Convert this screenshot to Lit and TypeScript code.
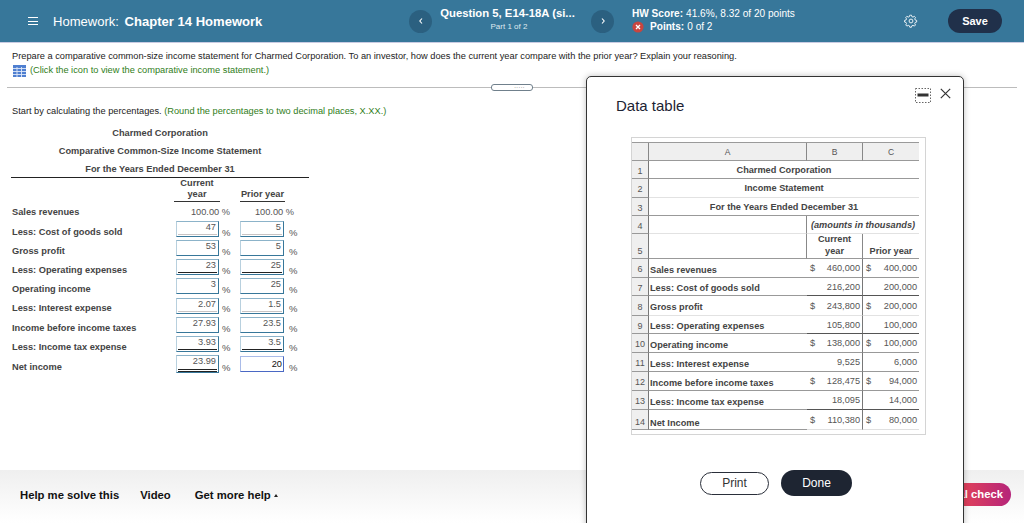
import { LitElement, html, css, svg } from 'lit'
import { customElement } from 'lit/decorators.js'

// rows of the left hand statement: label, current, prior, line under the value
const answers = [
  { label: 'Less: Cost of goods sold', cur: '47', pri: '5', line: 'thin' },
  { label: 'Gross profit', cur: '53', pri: '5', line: '' },
  { label: 'Less: Operating expenses', cur: '23', pri: '25', line: 'dark' },
  { label: 'Operating income', cur: '3', pri: '25', line: '' },
  { label: 'Less: Interest expense', cur: '2.07', pri: '1.5', line: 'thin' },
  { label: 'Income before income taxes', cur: '27.93', pri: '23.5', line: '' },
  { label: 'Less: Income tax expense', cur: '3.93', pri: '3.5', line: 'dark' },
  { label: 'Net income', cur: '23.99', pri: '20', line: 'double' }
]

// rows 6-14 of the popup sheet
const sheet = [
  { n: 6, label: 'Sales revenues', s: true, b: '460,000', c: '400,000', line: 'line' },
  { n: 7, label: 'Less: Cost of goods sold', s: false, b: '216,200', c: '200,000', line: 'dark' },
  { n: 8, label: 'Gross profit', s: true, b: '243,800', c: '200,000', line: 'soft' },
  { n: 9, label: 'Less: Operating expenses', s: false, b: '105,800', c: '100,000', line: 'dark' },
  { n: 10, label: 'Operating income', s: true, b: '138,000', c: '100,000', line: 'line' },
  { n: 11, label: 'Less: Interest expense', s: false, b: '9,525', c: '6,000', line: 'line' },
  { n: 12, label: 'Income before income taxes', s: true, b: '128,475', c: '94,000', line: 'line' },
  { n: 13, label: 'Less: Income tax expense', s: false, b: '18,095', c: '14,000', line: 'dark' },
  { n: 14, label: 'Net Income', s: true, b: '110,380', c: '80,000', line: 'double' }
]

const gear = svg`<path d="M9 1.6l1.1 0 .6 2 1.5.6 1.9-1 1.5 1.5-1 1.9.6 1.5 2 .6 0 2.2-2 .6-.6 1.5 1 1.9-1.5 1.5-1.9-1-1.5.6-.6 2-2.2 0-.6-2-1.5-.6-1.9 1-1.5-1.5 1-1.9-.6-1.5-2-.6 0-2.2 2-.6.6-1.5-1-1.9 1.5-1.5 1.9 1 1.5-.6.6-2z" fill="none" stroke="#fff" stroke-width="1.2" stroke-linejoin="round"/><circle cx="9.5" cy="9.5" r="2.6" fill="none" stroke="#fff" stroke-width="1.2"/>`

@customElement('app-root')
export class AppRoot extends LitElement {
  static styles = css`
    :host {
      display: block;
      position: relative;
      height: 523px;
      overflow: hidden;
      background: #fff;
      font-family: 'Liberation Sans', Arial, sans-serif;
      color: #222;
    }
    .page { display: flex; flex-direction: column; height: 523px; }

    header {
      display: flex;
      align-items: center;
      flex: none;
      height: 43px;
      box-sizing: border-box;
      background: #37779a;
      border-bottom: 1px solid #c9cbe2;
      color: #fff;
    }
    .burger { width: 10px; margin-left: 28px; display: flex; flex-direction: column; gap: 2.5px; }
    .burger i { display: block; height: 1px; background: #fff; }
    .hw { margin-left: 15px; width: 356px; font-size: 13.05px; white-space: nowrap; }
    .hw b { margin-left: 2px; }
    .nav {
      width: 23px; height: 23px; border-radius: 50%;
      background: #2b6080; flex: none;
      display: flex; align-items: center; justify-content: center;
    }
    .question { box-sizing: border-box; width: 159px; padding-right: 5px; text-align: center; flex: none; margin-top: -3px; }
    .question b { display: block; font-size: 11.3px; line-height: 14px; white-space: nowrap; margin-left: -3px; }
    .question span { display: block; font-size: 8px; line-height: 14px; color: #dfe9ef; }
    .score { margin-left: 18px; width: 272px; flex: none; font-size: 10.1px; line-height: 13px; margin-top: -2px; }
    .score div { display: flex; align-items: center; white-space: nowrap; }
    .score svg { margin-right: 6px; }
    .score b { margin-right: 3px; }
    .gear { display: block; flex: none; }
    .save {
      margin-left: 30px; width: 54px; height: 24px; border-radius: 12px;
      background: #20304a; color: #fff; font-size: 11px; font-weight: bold;
      display: flex; align-items: center; justify-content: center;
    }

    main { flex: 1; min-height: 0; font-size: 9.25px; }
    .prompt { padding: 7px 0 0 12px; line-height: 13px; height: 33px; box-sizing: content-box; }
    .green { color: #2f7d20; }
    .hint { display: flex; align-items: center; gap: 4px; margin-top: 1px; margin-left: 1px; }
    .hint svg { display: block; }
    .rule { position: relative; height: 1px; background: #bcbcbc; margin: 4px 7px 0; }
    .grip {
      position: absolute; left: 484px; top: -3px; width: 42px; height: 7px;
      box-sizing: border-box; border: 1px solid #70808c; border-radius: 3px; background: #fff;
      color: #555; font-size: 6px; line-height: 3px; text-align: right; padding-right: 7px; letter-spacing: .5px;
    }
    .start { padding: 17px 0 0 12px; line-height: 12px; }
    .titles { width: 298px; margin: 7px 0 0 11px; text-align: center; font-weight: bold; color: #444; }
    .titles div { height: 18px; line-height: 18px; }
    .statement {
      width: 298px; margin-left: 11px; border-top: 1.5px solid #222;
      display: grid;
      grid-template-columns: 163px 46px 20px 47px 22px;
      grid-template-rows: 24px 20px 19px 19px 19px 19px 20px 19px 19px 21px;
      font-weight: bold; color: #444; margin-top: -1px; box-sizing: border-box;
    }
    .colhead {
      align-self: end; text-align: center; line-height: 11px;
      border-bottom: 1px solid #333; height: 23px; box-sizing: border-box;
      display: flex; flex-direction: column; justify-content: flex-end; padding-bottom: 1px;
    }
    .colhead.pri { margin-right: 2px; }
    .label { padding-left: 1px; align-self: center; white-space: nowrap; }
    .fixed { font-weight: normal; color: #555; text-align: right; align-self: center; grid-column: span 2; white-space: nowrap; }
    .fixed.cur { padding-right: 10px; }
    .fixed.pri { padding-right: 15px; }
    .unit { font-weight: normal; color: #555; align-self: center; padding: 1px 0 0 2px; font-size: 9.5px; }
    .box {
      box-sizing: border-box; width: 43px; height: 16px; align-self: center;
      margin: 0 0 5px 2px;
      border: 1px solid #37779a; border-top-color: #8cb3c9; border-left-color: #b8d0de;
      font-weight: normal; color: #555; text-align: right; line-height: 11px;
      padding: 0 1px 0 1px;
    }
    .box.pri { margin-left: 0; width: 44px; }
    .box span { display: block; height: 12px; padding-right: 1px; }
    .box .thin { border-bottom: 1px solid #c9c4c4; }
    .box .dark { border-bottom: 1px solid #222; }
    .box .double { border-bottom: 3px double #222; height: 13px; }
    .box.tall { height: 18px; }
    .box.active { border-color: #4a68c4; border-top-color: #a9bbe8; border-left-color: #a9bbe8; color: #111; line-height: 15px; }

    footer {
      flex: none; height: 53px; box-sizing: border-box;
      background: linear-gradient(#efefef, #fff);
      display: flex; align-items: center; padding: 0 13px 4px 20px;
      font-size: 11.3px; font-weight: bold; color: #111;
    }
    footer span { white-space: nowrap; }
    .video { margin-left: 21px; }
    .more { margin-left: 24px; }
    .caret { display: inline-block; margin-left: 3px; vertical-align: 2px; border: 2.5px solid transparent; border-top: 0; border-bottom: 3px solid #222; }
    .check {
      margin-left: auto; width: 120px; height: 23px; border-radius: 12px;
      background: linear-gradient(90deg, #e0415a 60%, #b5247a); color: #fff;
      font-size: 11.3px; line-height: 23px; text-align: right; padding-right: 8px; box-sizing: border-box;
    }

    .dialog {
      position: absolute; left: 586px; top: 76px; width: 378px; height: 460px;
      box-sizing: border-box; background: #fff;
      border: 1.5px solid #333; border-radius: 5px;
      box-shadow: 0 0 6px rgba(0, 0, 0, .25);
      padding: 0 0 0 44px;
    }
    .tools { position: absolute; right: 12px; top: 11px; display: flex; align-items: flex-start; gap: 9px; }
    .tools svg { display: block; }
    .dialog h2 { margin: 20px 0 0 -15px; font-size: 15px; font-weight: normal; line-height: 18px; color: #1c2333; }
    .frame {
      box-sizing: border-box; width: 295px; height: 298px;
      margin: 22px 0 0 0; border: 1px solid #d4d4d4; padding: 4px 6px 0 0;
    }
    .sheet {
      display: grid;
      grid-template-columns: 17px 158px 56px 56px;
      grid-template-rows: 18px 18px 19px 18px 18px 25px 19px 18px 20px 18px 19px 19px 19px 19px 20px;
      width: 287px; font-size: 9.2px; font-weight: bold; color: #444;
      border-top: 1px solid #9a9a9a;
    }
    .sheet > div { box-sizing: border-box; border-bottom: 1px solid #999; white-space: nowrap; min-width: 0; }
    .hd { background: #efefef; font-weight: normal; text-align: center; line-height: 19px; border-right: 1px solid #888; color: #555; font-size: 8.5px; }
    .hd.end { border-right: 0; }
    .num { background: #efefef; font-weight: normal; text-align: center; color: #555; border-right: 1px solid #777; display: flex; align-items: center; justify-content: center; font-size: 9px; padding-top: 2px; }
    .num.low { align-items: flex-end; padding-bottom: 2px; }
    .num.double { padding-top: 5px; }
    .span3 { grid-column: 2 / 5; text-align: center; line-height: 19px; }
    .soft { border-bottom-color: #e2e2e2 !important; }
    .a { display: flex; align-items: center; padding-left: 1px; }
    .a.low { padding-top: 3px; }
    .a.double { padding-top: 6px; }
    .empty { border-right: 1px solid #888; }
    .span2 { grid-column: 3 / 5; font-style: italic; text-align: center; line-height: 19px; }
    .h2 { text-align: center; line-height: 11.5px; display: flex; flex-direction: column; justify-content: flex-end; padding-bottom: 1px; }
    .h2.b { border-right: 1px solid #888; }
    .amt { display: flex; justify-content: space-between; align-items: center; font-weight: normal; color: #555; padding: 0 2px 0 3px; }
    .amt.b { border-right: 1px solid #777; }
    .amt.line { border-bottom-color: #999; }
    .amt.dark { border-bottom-color: #555; }
    .amt.double { border-bottom: 1px solid #e0e0e0; }
    .actions { display: flex; align-items: center; gap: 12px; margin: 35px 0 0 69px; font-size: 12px; }
    .print {
      box-sizing: border-box; width: 69px; height: 23px; border: 1.5px solid #2a2f3a; border-radius: 12px;
      text-align: center; line-height: 20px; color: #333;
    }
    .done {
      width: 71px; height: 26px; border-radius: 13px; background: #1e2532; color: #fff;
      text-align: center; line-height: 26px;
    }
  `

  chevron (d: string) {
    return html`<svg width="8" height="8" viewBox="0 0 8 8"><path d=${d} fill="none" stroke="#fff" stroke-width="1.1"/></svg>`
  }

  renderStatementRow (r: typeof answers[number], i: number) {
    const last = i === answers.length - 1
    return html`
      <div class="label">${r.label}</div>
      <div class="box ${last ? 'tall' : ''}"><span class=${r.line}>${r.cur}</span></div>
      <div class="unit">%</div>
      ${last
        ? html`<div class="box pri active">${r.pri}</div>`
        : html`<div class="box pri"><span class=${r.line}>${r.pri}</span></div>`}
      <div class="unit">%</div>
    `
  }

  renderSheetRow (r: typeof sheet[number]) {
    const last = r.line === 'double' ? 'double' : ''
    return html`
      <div class="num ${last}">${r.n}</div>
      <div class="a low ${last} ${r.line === 'soft' ? 'soft' : ''}">${r.label}</div>
      <div class="amt b ${r.line}"><span>${r.s ? '$' : ''}</span><span>${r.b}</span></div>
      <div class="amt ${r.line}"><span>${r.s ? '$' : ''}</span><span>${r.c}</span></div>
    `
  }

  render () {
    return html`
      <div class="page">
        <header>
          <div class="burger"><i></i><i></i><i></i></div>
          <div class="hw">Homework: <b>Chapter 14 Homework</b></div>
          <div class="nav">${this.chevron('M5 1.5L2.8 4 5 6.5')}</div>
          <div class="question"><b>Question 5, E14-18A (si...</b><span>Part 1 of 2</span></div>
          <div class="nav">${this.chevron('M3 1.5L5.2 4 3 6.5')}</div>
          <div class="score">
            <div><b>HW Score:</b> 41.6%, 8.32 of 20 points</div>
            <div>
              <svg width="12" height="12" viewBox="0 0 12 12"><circle cx="6" cy="6" r="5.6" fill="#c8453f"/><path d="M4 4l4 4M8 4l-4 4" stroke="#fff" stroke-width="1.3"/></svg>
              <b>Points:</b> 0 of 2
            </div>
          </div>
          <svg class="gear" width="14" height="14" viewBox="0 0 19 19">${gear}</svg>
          <div class="save">Save</div>
        </header>

        <main>
          <div class="prompt">
            <div>Prepare a comparative common-size income statement for Charmed Corporation. To an investor, how does the current year compare with the prior year? Explain your reasoning.</div>
            <div class="hint green">
              <svg width="13" height="12" viewBox="0 0 13 12">
                <rect width="13" height="12" fill="#4f7fd0"/>
                <path d="M0 3.5h13M0 6.5h13M0 9.5h13M4 2v10M8.5 2v10" stroke="#dfe8f8" stroke-width=".9"/>
              </svg>
              (Click the icon to view the comparative income statement.)
            </div>
          </div>
          <div class="rule"><div class="grip">.....</div></div>
          <div class="start">Start by calculating the percentages. <span class="green">(Round the percentages to two decimal places, X.XX.)</span></div>
          <div class="titles">
            <div>Charmed Corporation</div>
            <div>Comparative Common-Size Income Statement</div>
            <div>For the Years Ended December 31</div>
          </div>
          <div class="statement">
            <div></div>
            <div class="colhead"><div>Current</div><div>year</div></div>
            <div></div>
            <div class="colhead pri">Prior year</div>
            <div></div>
            <div class="label">Sales revenues</div>
            <div class="fixed cur">100.00 %</div>
            <div class="fixed pri">100.00 %</div>
            ${answers.map((r, i) => this.renderStatementRow(r, i))}
          </div>
        </main>

        <footer>
          <span>Help me solve this</span>
          <span class="video">Video</span>
          <span class="more">Get more help<i class="caret"></i></span>
          <div class="check">Final check</div>
        </footer>
      </div>

      <div class="dialog">
        <div class="tools">
          <svg width="16" height="15" viewBox="0 0 16 15">
            <rect x=".5" y=".5" width="15" height="14" fill="none" stroke="#666" stroke-dasharray="1.5 1.5"/>
            <rect x="2.5" y="5.5" width="11" height="3" fill="#333"/>
          </svg>
          <svg width="11" height="11" viewBox="0 0 11 11"><path d="M.8.8l9.4 9.4M10.2.8L.8 10.2" stroke="#333" stroke-width="1.2"/></svg>
        </div>
        <h2>Data table</h2>
        <div class="frame">
          <div class="sheet">
            <div class="hd"></div><div class="hd">A</div><div class="hd">B</div><div class="hd end">C</div>
            <div class="num">1</div><div class="span3">Charmed Corporation</div>
            <div class="num">2</div><div class="span3 soft">Income Statement</div>
            <div class="num">3</div><div class="span3">For the Years Ended December 31</div>
            <div class="num">4</div><div class="empty soft"></div><div class="span2 soft">(amounts in thousands)</div>
            <div class="num low">5</div><div class="empty"></div>
            <div class="h2 b"><div>Current</div><div>year</div></div>
            <div class="h2">Prior year</div>
            ${sheet.map(r => this.renderSheetRow(r))}
          </div>
        </div>
        <div class="actions">
          <div class="print">Print</div>
          <div class="done">Done</div>
        </div>
      </div>
    `
  }
}
